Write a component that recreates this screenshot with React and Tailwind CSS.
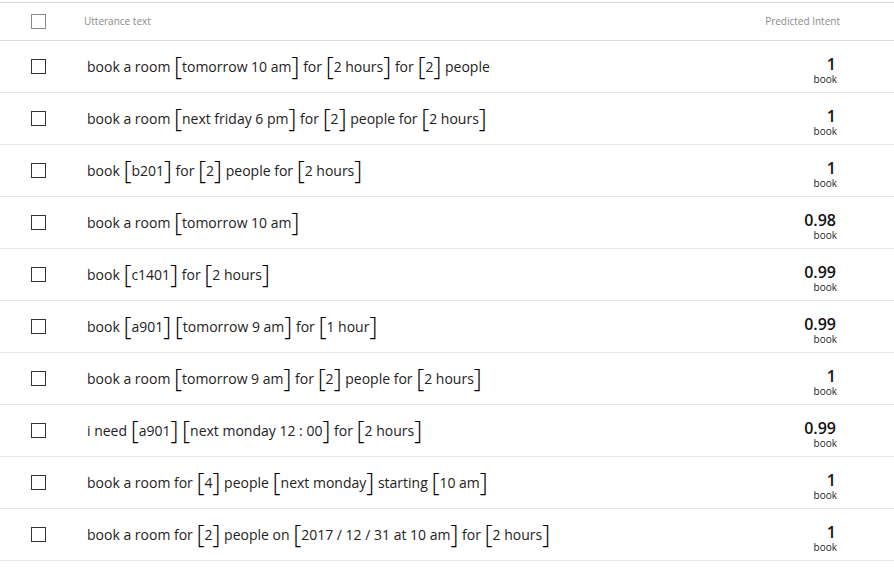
import React from "react";

const rows = [
  { parts: ["book a room ", ["tomorrow 10 am"], " for ", ["2 hours"], " for ", ["2"], " people"], score: "1" },
  { parts: ["book a room ", ["next friday 6 pm"], " for ", ["2"], " people for ", ["2 hours"]], score: "1" },
  { parts: ["book ", ["b201"], " for ", ["2"], " people for ", ["2 hours"]], score: "1" },
  { parts: ["book a room ", ["tomorrow 10 am"]], score: "0.98" },
  { parts: ["book ", ["c1401"], " for ", ["2 hours"]], score: "0.99" },
  { parts: ["book ", ["a901"], " ", ["tomorrow 9 am"], " for ", ["1 hour"]], score: "0.99" },
  { parts: ["book a room ", ["tomorrow 9 am"], " for ", ["2"], " people for ", ["2 hours"]], score: "1" },
  { parts: ["i need ", ["a901"], " ", ["next monday 12 : 00"], " for ", ["2 hours"]], score: "0.99" },
  { parts: ["book a room for ", ["4"], " people ", ["next monday"], " starting ", ["10 am"]], score: "1" },
  { parts: ["book a room for ", ["2"], " people on ", ["2017 / 12 / 31 at 10 am"], " for ", ["2 hours"]], score: "1" },
];

function Entity({ text }) {
  return (
    <span className="inline-flex items-center">
      <span className="text-[25px] font-light leading-none text-black relative -top-[1px]">[</span>
      <span>{text}</span>
      <span className="text-[25px] font-light leading-none text-black relative -top-[1px]">]</span>
    </span>
  );
}

export default function App() {
  return (
    <div className="w-[894px] h-[570px] bg-white pt-[2px]" style={{ fontFamily: '"Open Sans", "Noto Sans", sans-serif' }}>
      <div className="border-t border-[#d6d6d6]">
        <div className="h-[38px] flex items-center border-b border-[#dcdcdc]">
          <div className="w-[31px]" />
          <div className="w-[15px] h-[15px] border border-[#8a8a8a]" />
          <div className="ml-[38px] flex-1 text-[10px] text-[#8a8a8a]">Utterance text</div>
          <div className="w-[200px] pr-[54px] text-right text-[10px] text-[#8a8a8a]">Predicted Intent</div>
        </div>
        {rows.map((r, i) => (
          <div key={i} className="h-[52px] flex items-center border-b border-[#e6e6e6]">
            <div className="w-[31px]" />
            <div className="w-[15px] h-[15px] border border-[#333]" />
            <div className="ml-[41px] flex-1 flex items-center text-[14px] text-[#222] whitespace-pre">
              {r.parts.map((p, j) =>
                Array.isArray(p) ? <Entity key={j} text={p[0]} /> : <span key={j}>{p}</span>
              )}
            </div>
            <div className="w-[200px] pr-[57px] pt-[6px] flex flex-col items-end">
              <div className="text-[16px] font-semibold leading-[18px] text-[#111] mr-[1px]">{r.score}</div>
              <div className="text-[10px] leading-[12px] text-[#222]">book</div>
            </div>
          </div>
        ))}
      </div>
    </div>
  );
}
